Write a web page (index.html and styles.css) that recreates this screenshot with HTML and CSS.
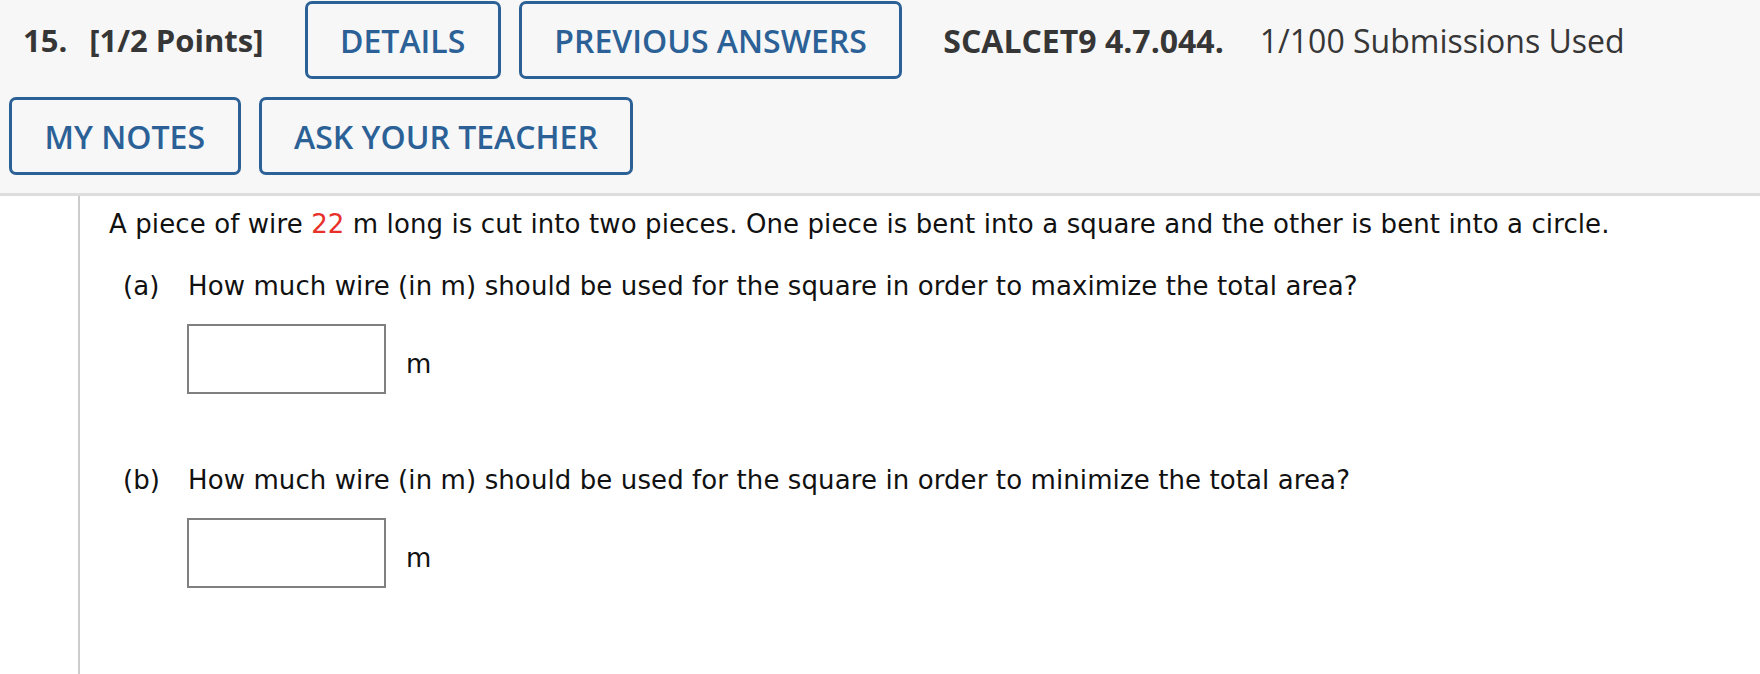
FILE: index.html
```html
<!DOCTYPE html>
<html>
<head>
<meta charset="utf-8">
<link rel="stylesheet" href="styles.css">
</head>
<body>
<div class="header">
  <div class="row">
    <span class="qnum">15.</span>
    <span class="points">[1/2 Points]</span>
    <button class="btn">DETAILS</button>
    <button class="btn">PREVIOUS ANSWERS</button>
    <span class="code">SCALCET9 4.7.044.</span>
    <span class="subs">1/100 Submissions Used</span>
  </div>
  <div class="row">
    <button class="btn">MY NOTES</button>
    <button class="btn">ASK YOUR TEACHER</button>
  </div>
</div>
<div class="content">
  <p class="intro">A piece of wire <span class="red">22</span> m long is cut into two pieces. One piece is bent into a square and the other is bent into a circle.</p>
  <div class="part">
    <div class="qline"><span class="label">(a)</span><span>How much wire (in m) should be used for the square in order to maximize the total area?</span></div>
    <div class="answer"><span class="box"></span><span class="unit">m</span></div>
  </div>
  <div class="part">
    <div class="qline"><span class="label">(b)</span><span>How much wire (in m) should be used for the square in order to minimize the total area?</span></div>
    <div class="answer"><span class="box"></span><span class="unit">m</span></div>
  </div>
</div>
</body>
</html>
```
FILE: styles.css
```css
html, body {
  margin: 0;
  padding: 0;
  background: #ffffff;
}
body {
  height: 674px;
  overflow: hidden;
}
.header {
  background: #f7f7f7;
  border-bottom: 3px solid #dddddd;
  padding: 1px 0 18px 9px;
  display: flex;
  flex-direction: column;
  gap: 18px;
  font-family: "Open Sans", sans-serif;
  color: #363636;
}
.row {
  display: flex;
  align-items: center;
  height: 78px;
}
.qnum {
  font-weight: 700;
  font-size: 31px;
  margin-left: 14px;
}
.points {
  font-weight: 700;
  font-size: 31px;
  margin-left: 22px;
  margin-right: 41px;
}
.btn {
  box-sizing: border-box;
  height: 78px;
  margin: 0 18px 0 0;
  border: 3px solid #2b6196;
  border-radius: 7px;
  background: transparent;
  color: #2b6196;
  font-family: "Open Sans", sans-serif;
  font-weight: 600;
  font-size: 32px;
  padding: 0 32.5px;
}
.code {
  font-weight: 700;
  font-size: 32px;
  margin-left: 23px;
  margin-right: 36px;
}
.subs {
  font-weight: 400;
  font-size: 32px;
}
.content {
  box-sizing: border-box;
  margin-left: 78px;
  border-left: 2px solid #cccccc;
  padding: 12px 0 0 29px;
  height: 478px;
  font-family: "DejaVu Sans", Verdana, sans-serif;
  font-size: 26px;
  letter-spacing: 0.1px;
  line-height: 32px;
  color: #111111;
}
.intro {
  margin: 0;
}
.red {
  color: #e8302a;
}
.part {
  margin-top: 30px;
}
.part + .part {
  margin-top: 70px;
}
.qline {
  display: flex;
  padding-left: 14px;
}
.label {
  width: 65px;
}
.answer {
  display: flex;
  align-items: center;
  margin-top: 22px;
  padding-left: 78px;
}
.box {
  box-sizing: border-box;
  width: 199px;
  height: 70px;
  border: 2px solid #808080;
  background: #fff;
}
.unit {
  margin-left: 20px;
  margin-top: 10px;
}
```
